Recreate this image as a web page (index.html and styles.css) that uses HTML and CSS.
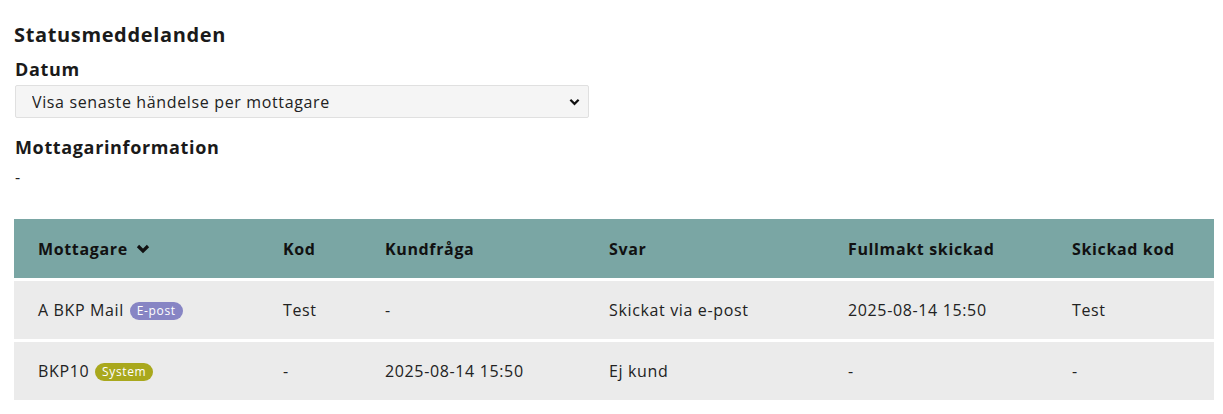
FILE: index.html
```html
<!DOCTYPE html>
<html lang="sv">
<head>
<meta charset="utf-8">
<title>Statusmeddelanden</title>
<link rel="stylesheet" href="styles.css">
</head>
<body>
<main class="page">
  <h2 class="title">Statusmeddelanden</h2>
  <label class="label" for="datum">Datum</label>
  <div class="select-wrap">
    <select id="datum" class="select">
      <option>Visa senaste händelse per mottagare</option>
    </select>
    <svg class="select-arrow" viewBox="0 0 12 8" width="11" height="8"><path d="M1.5 1.5 L6 6 L10.5 1.5" fill="none" stroke="#111" stroke-width="2.4"/></svg>
  </div>
  <h3 class="label section">Mottagarinformation</h3>
  <p class="info">-</p>

  <table class="table">
    <colgroup>
      <col class="c1"><col class="c2"><col class="c3"><col class="c4"><col class="c5"><col class="c6">
    </colgroup>
    <thead>
      <tr>
        <th><span class="sort">Mottagare <svg viewBox="0 0 14 10" width="14" height="10"><path d="M2 2 L7 7 L12 2" fill="none" stroke="#111" stroke-width="3.2"/></svg></span></th>
        <th>Kod</th>
        <th>Kundfråga</th>
        <th>Svar</th>
        <th>Fullmakt skickad</th>
        <th>Skickad kod</th>
      </tr>
    </thead>
    <tbody>
      <tr>
        <td>A BKP Mail <span class="badge badge-mail">E-post</span></td>
        <td>Test</td>
        <td>-</td>
        <td>Skickat via e-post</td>
        <td>2025-08-14 15:50</td>
        <td>Test</td>
      </tr>
      <tr>
        <td>BKP10 <span class="badge badge-system">System</span></td>
        <td>-</td>
        <td>2025-08-14 15:50</td>
        <td>Ej kund</td>
        <td>-</td>
        <td>-</td>
      </tr>
    </tbody>
  </table>
</main>
</body>
</html>
```
FILE: styles.css
```css
* { box-sizing: border-box; }
body {
  margin: 0;
  background: #fff;
  color: #222;
  font-family: "Open Sans", "Noto Sans", sans-serif;
  letter-spacing: 0.04em;
}
.page {
  padding: 21px 9px 0 14px;
  display: flex;
  flex-direction: column;
  align-items: flex-start;
}
.title {
  margin: 0;
  font-size: 20px;
  font-weight: 700;
  line-height: 28px;
  color: #1a1a1a;
}
.label {
  display: block;
  margin: 8px 0 0 1px;
  font-size: 18px;
  font-weight: 700;
  line-height: 24px;
  color: #1a1a1a;
}
.select-wrap {
  position: relative;
  margin: 4px 0 0 1px;
}
.select {
  appearance: none;
  -webkit-appearance: none;
  width: 574px;
  height: 33px;
  padding: 0 16px;
  border: 1px solid #e0e0e0;
  border-radius: 2px;
  background: #f5f5f5;
  font-family: inherit;
  letter-spacing: inherit;
  font-size: 16px;
  color: #222;
}
.select-arrow {
  position: absolute;
  right: 9px;
  top: 13px;
  pointer-events: none;
}
.section { margin-top: 17px; }
.info {
  margin: 7px 0 0 1px;
  font-size: 16px;
  line-height: 22px;
}
.table {
  margin-top: 28px;
  width: 1200px;
  border-collapse: separate;
  border-spacing: 0 3px;
  table-layout: fixed;
}
.c1 { width: 245px; }
.c2 { width: 102px; }
.c3 { width: 224px; }
.c4 { width: 239px; }
.c5 { width: 224px; }
.c6 { width: 166px; }
th, td {
  text-align: left;
  padding: 0 0 0 24px;
  font-size: 16px;
}
th {
  height: 59px;
  background: #7aa6a4;
  font-weight: 700;
  color: #111;
}
td {
  height: 58px;
  background: #ebebeb;
  color: #222;
}
.sort {
  display: inline-flex;
  align-items: center;
  gap: 8px;
}
.badge {
  display: inline-block;
  margin-left: 1px;
  padding: 0 7px;
  border-radius: 9px;
  font-size: 12px;
  line-height: 18px;
  color: #fff;
  vertical-align: 1px;
}
.badge-mail { background: #8785c4; }
.badge-system { background: #a9a81d; }
```
